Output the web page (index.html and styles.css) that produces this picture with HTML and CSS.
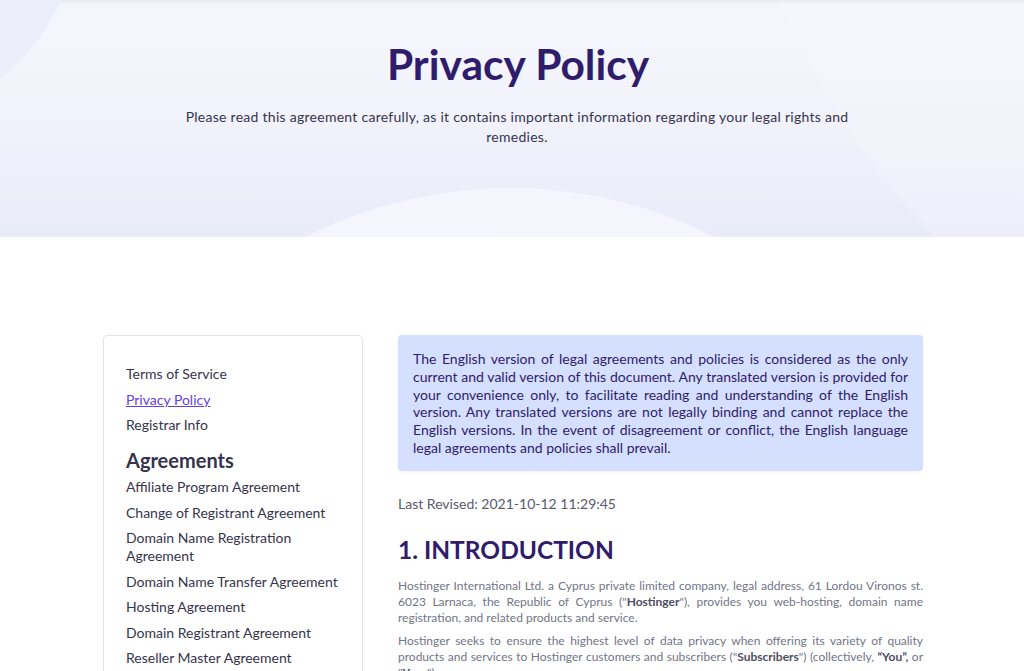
FILE: index.html
```html
<!DOCTYPE html>
<html lang="en">
<head>
<meta charset="utf-8">
<title>Privacy Policy</title>
<link rel="stylesheet" href="styles.css">
</head>
<body>
<header class="hero">
  <div class="hero-deco deco-tl"></div>
  <div class="hero-deco deco-r"></div>
  <div class="hero-deco deco-b"></div>
  <div class="hero-inner">
    <h1 class="hero-title">Privacy Policy</h1>
    <p class="hero-sub">Please read this agreement carefully, as it contains important information regarding your legal rights and remedies.</p>
  </div>
</header>
<main class="layout">
  <aside class="sidebar">
    <ul class="nav-list">
      <li><a class="nav-link" href="#">Terms of Service</a></li>
      <li><a class="nav-link active" href="#">Privacy Policy</a></li>
      <li><a class="nav-link" href="#">Registrar Info</a></li>
    </ul>
    <h3 class="nav-heading">Agreements</h3>
    <ul class="nav-list">
      <li><a class="nav-link" href="#">Affiliate Program Agreement</a></li>
      <li><a class="nav-link" href="#">Change of Registrant Agreement</a></li>
      <li><a class="nav-link" href="#">Domain Name Registration Agreement</a></li>
      <li><a class="nav-link" href="#">Domain Name Transfer Agreement</a></li>
      <li><a class="nav-link" href="#">Hosting Agreement</a></li>
      <li><a class="nav-link" href="#">Domain Registrant Agreement</a></li>
      <li><a class="nav-link" href="#">Reseller Master Agreement</a></li>
    </ul>
  </aside>
  <article class="content">
    <div class="notice">The English version of legal agreements and policies is considered as the only current and valid version of this document. Any translated version is provided for your convenience only, to facilitate reading and understanding of the English version. Any translated versions are not legally binding and cannot replace the English versions. In the event of disagreement or conflict, the English language legal agreements and policies shall prevail.</div>
    <p class="revised">Last Revised: 2021-10-12 11:29:45</p>
    <h2 class="section-title">1. INTRODUCTION</h2>
    <p class="para">Hostinger International Ltd. a Cyprus private limited company, legal address, 61 Lordou Vironos st. 6023 Larnaca, the Republic of Cyprus ("<b>Hostinger</b>"), provides you web-hosting, domain name registration, and related products and service.</p>
    <p class="para">Hostinger seeks to ensure the highest level of data privacy when offering its variety of quality products and services to Hostinger customers and subscribers ("<b>Subscribers</b>") (collectively, <b>“You”,</b> or "<b>Your</b>").</p>
  </article>
</main>
</body>
</html>
```
FILE: styles.css
```css
* { box-sizing: border-box; }
html, body { margin: 0; padding: 0; }
body {
  font-family: "Lato", "Noto Sans", sans-serif;
  color: #2f1c6a;
  background: #fff;
  overflow: hidden;
}
.hero {
  position: relative;
  height: 237px;
  overflow: hidden;
  background: linear-gradient(180deg, #f5f6fd 0%, #f1f2fb 50%, #e9ebf9 100%);
  box-shadow: inset 0 5px 4px -3px rgba(0,0,0,0.06);
}
.hero-deco {
  position: absolute;
  border-radius: 50%;
}
.deco-tl {
  left: -384px; top: -334px;
  width: 468px; height: 468px;
  background: #eceefb;
}
.deco-r {
  left: 720px; top: -1080px;
  width: 1560px; height: 1560px;
  background: rgba(255,255,255,0.18);
}
.deco-b {
  left: 57px; top: 188px;
  width: 906px; height: 906px;
  background: linear-gradient(180deg, #f4f5fd 0%, #eff0fb 40%);
}
.hero-inner {
  position: relative;
  display: flex;
  flex-direction: column;
  align-items: center;
  padding-top: 37px;
}
.hero-title {
  margin: 0;
  font-size: 42.5px;
  line-height: 54px;
  font-weight: 700;
  color: #2f1c6a;
  padding-left: 12px;
}
.hero-sub {
  margin: 16px 0 0;
  width: 700px;
  text-align: center;
  font-size: 14px;
  line-height: 20px;
  letter-spacing: 0.27px;
  color: #36344d;
  padding-left: 10px;
}
.layout {
  width: 820px;
  margin: 98px 0 0 103px;
  display: flex;
  align-items: flex-start;
  gap: 35px;
}
.sidebar {
  flex: 0 0 260px;
  border: 1px solid #e3e5ec;
  border-radius: 4px;
  box-shadow: 0 1px 3px rgba(0,0,0,0.05);
  padding: 29px 22px 20px;
  height: 400px;
}
.nav-list {
  list-style: none;
  margin: 0;
  padding: 0;
  display: flex;
  flex-direction: column;
  gap: 7.5px;
}
.nav-link {
  display: block;
  font-size: 14px;
  line-height: 18px;
  color: #36344d;
  text-decoration: none;
}
.nav-link.active {
  color: #673de6;
  text-decoration: underline;
}
.nav-heading {
  margin: 13px 0 5px;
  font-size: 20px;
  line-height: 26px;
  font-weight: 700;
  color: #36344d;
}
.content {
  flex: 0 0 525px;
}
.notice {
  background: #d5dfff;
  border-radius: 4px;
  box-shadow: 0 1px 3px rgba(0,0,0,0.06);
  padding: 15px 15px 14px;
  font-size: 14px;
  line-height: 17.8px;
  color: #2f1c6a;
  text-align: justify;
}
.revised {
  margin: 24px 0 0;
  font-size: 14px;
  line-height: 18px;
  color: #5b5a6e;
}
.section-title {
  margin: 22px 0 0;
  font-size: 24.5px;
  line-height: 30px;
  font-weight: 700;
  color: #2f1c6a;
}
.para {
  margin: 13px 0 0;
  font-size: 12px;
  line-height: 16px;
  color: #727586;
  text-align: justify;
}
.para + .para { margin-top: 7px; }
.para b { color: #4f4d63; }
```
